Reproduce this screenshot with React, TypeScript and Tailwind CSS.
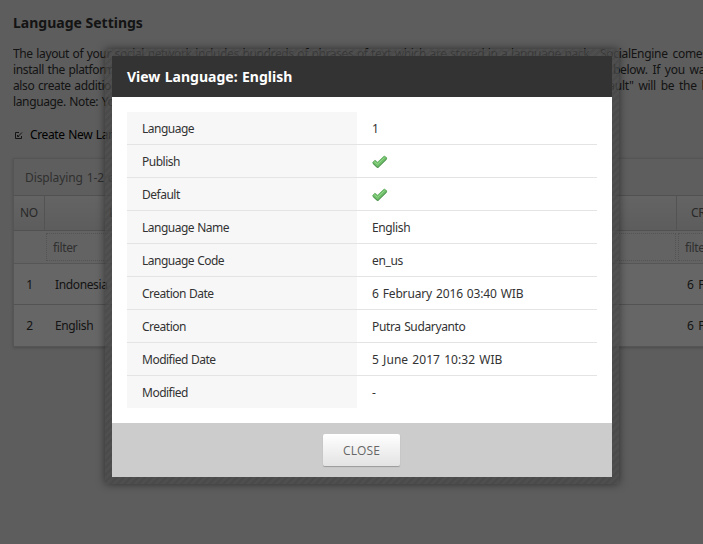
import React from "react";

const introLines = [
  { left: "The layout of your social network includes hundreds of phrases of text which are stored in a language pack.", right: "SocialEngine comes with an English pack", width: "w-[587px]" },
  { left: "install the platform. If you want to change any of these phrases, you can edit the pack", right: "below. If you want to allow users", width: "w-[600px]" },
  { left: "also create additional packs. If you have multiple packs, the pack you've selected as", right: "\"Default\" will be the language", width: "w-[572px]" },
  { left: "language. Note: You can not edit the default language", right: "", width: "w-[600px]" },
];

const languages = [
  { no: "1", name: "Indonesia" },
  { no: "2", name: "English" },
];

const Check = () => (
  <svg width="16" height="14" viewBox="0 0 16 14" className="block">
    <path d="M0.8 7.3 2.9 5.2 5.6 7.2 12.2 1.1 14.6 2.6 14.6 4 6.2 12.2 5 12.2 0.8 8.3Z" fill="#6fc069" stroke="#62a95f" strokeWidth="0.8" />
    <path d="M2.2 6.7 5.6 9.2 12.6 2.5" fill="none" stroke="#93d68c" strokeWidth="1" />
    <path d="M1.2 8.6 5.1 12.3H6.2L14.8 3.8" fill="none" stroke="#3f8543" strokeWidth="0.9" />
  </svg>
);

const details: { label: string; value: React.ReactNode; spacing?: string }[] = [
  { label: "Language", value: "1" },
  { label: "Publish", value: <Check /> },
  { label: "Default", value: <Check /> },
  { label: "Language Name", value: "English" },
  { label: "Language Code", value: "en_us" },
  { label: "Creation Date", value: "6 February 2016 03:40 WIB", spacing: "tracking-[-0.15px] [word-spacing:1px]" },
  { label: "Creation", value: "Putra Sudaryanto" },
  { label: "Modified Date", value: "5 June 2017 10:32 WIB", spacing: "tracking-[0.05px] [word-spacing:1px]" },
  { label: "Modified", value: "-" },
];

function SettingsPage() {
  return (
    <div className="h-full w-[1100px] bg-[#e8e8e8] pl-[13px] pt-[13px] text-[#333]">
      <h1 className="h-[33px] text-[14px] font-bold leading-[20px] tracking-normal [word-spacing:0px]">Language Settings</h1>
      <div className="leading-[16px]">
        {introLines.map((l) => (
          <div key={l.left} className="flex whitespace-nowrap">
            <span className={`${l.width} shrink-0 overflow-hidden`}>{l.left}</span>
            <span className="tracking-[-0.3px] [word-spacing:2px]">{l.right}</span>
          </div>
        ))}
      </div>
      <div className="mt-[16px] flex h-[18px] items-center text-black">
        <svg width="9" height="9" viewBox="0 0 9 9" className="ml-[1px] mr-[7px]" fill="none" stroke="#333">
          <path d="M5 1.5H1.5V7.5H7.5V5M4 5.5 8 1.5M3.5 4V5.5H5" />
        </svg>
        <span>Create New Language</span>
      </div>
      <div className="mt-[14px] w-[1000px] border border-[#d4d4d4] bg-white shadow-[0_1px_3px_#bbb]">
        <div className="h-[37px] border-b border-[#cacaca] bg-[#ececec] pl-[11px] leading-[38px] tracking-[-0.1px] text-[#777]">Displaying 1-2 of 2 result(s).</div>
        <div className="flex h-[35px] border-b border-[#cacaca] bg-linear-to-b from-[#fafafa] to-[#e8e8e8] leading-[34px] text-[#666]">
          <span className="w-[31px] border-r border-[#cfcfcf] text-center">NO</span>
          <span className="w-[632px] border-r border-[#cfcfcf] pl-[64px]">LANGUAGE</span>
          <span className="pl-[14px]">CREATION DATE</span>
        </div>
        <div className="flex h-[33px] border-b border-[#d8d8d8] bg-[#f8f8f8] py-[2px] pl-[32px] leading-[27px] text-[#777]">
          <span className="mr-[2px] w-[630px] border border-dotted border-[#d0d0d0] pl-[6px]">filter</span>
          <span className="w-[160px] border border-dotted border-[#d0d0d0] pl-[6px]">filter</span>
        </div>
        {languages.map((row) => (
          <div key={row.no} className="flex h-[41px] border-b border-[#d0d0d0] leading-[41px] last:border-0">
            <span className="w-[31px] text-center">{row.no}</span>
            <span className="w-[632px] pl-[10px]">{row.name}</span>
            <span className="pl-[10px] [word-spacing:2px]">6 February 2016</span>
          </div>
        ))}
      </div>
    </div>
  );
}

function LanguageDialog() {
  return (
    <div className="absolute left-[105px] top-[49px] rounded-[3px] bg-[repeating-linear-gradient(135deg,rgba(68,68,68,0.75)_0px,rgba(68,68,68,0.75)_2px,rgba(74,74,74,0.75)_3px,rgba(74,74,74,0.75)_5px)] p-[7px] shadow-[0_0_8px_rgba(0,0,0,0.5)]">
      <section className="w-[500px] bg-white">
        <h2 className="h-[41px] bg-[#333] pl-[15px] text-[14px] font-bold leading-[41px] tracking-normal text-white">View Language: English</h2>
        <div className="p-[15px]">
          {details.map((d) => (
            <div key={d.label} className="group flex h-[33px] leading-[34px] text-[#333] last:h-[32px]">
              <div className="w-[230px] border-b border-[#e4e4e4] bg-[#f7f7f7] pl-[15px] tracking-[-0.5px] [word-spacing:0.4px] group-last:border-0">{d.label}</div>
              <div className={`flex flex-1 items-center border-b border-[#e4e4e4] pl-[15px] pt-px group-last:border-0 ${d.spacing ?? ""}`}>{d.value}</div>
            </div>
          ))}
        </div>
        <div className="flex h-[54px] justify-center bg-[#ccc] pr-[2px] pt-[11px]">
          <button className="h-[32px] w-[77px] rounded-[2px] bg-linear-to-b from-white to-[#e3e3e3] pl-[1px] pt-[2px] font-['Open_Sans',sans-serif] text-[12px] tracking-[0.1px] text-[#666] shadow-[0_1px_1px_#999]">CLOSE</button>
        </div>
      </section>
    </div>
  );
}

export default function App() {
  return (
    <main className="relative h-[544px] w-[703px] overflow-hidden font-['Noto_Sans',sans-serif] text-[12px] tracking-[-0.37px] [word-spacing:0.8px]">
      <SettingsPage />
      <div className="absolute inset-0 bg-black/60" />
      <LanguageDialog />
    </main>
  );
}
